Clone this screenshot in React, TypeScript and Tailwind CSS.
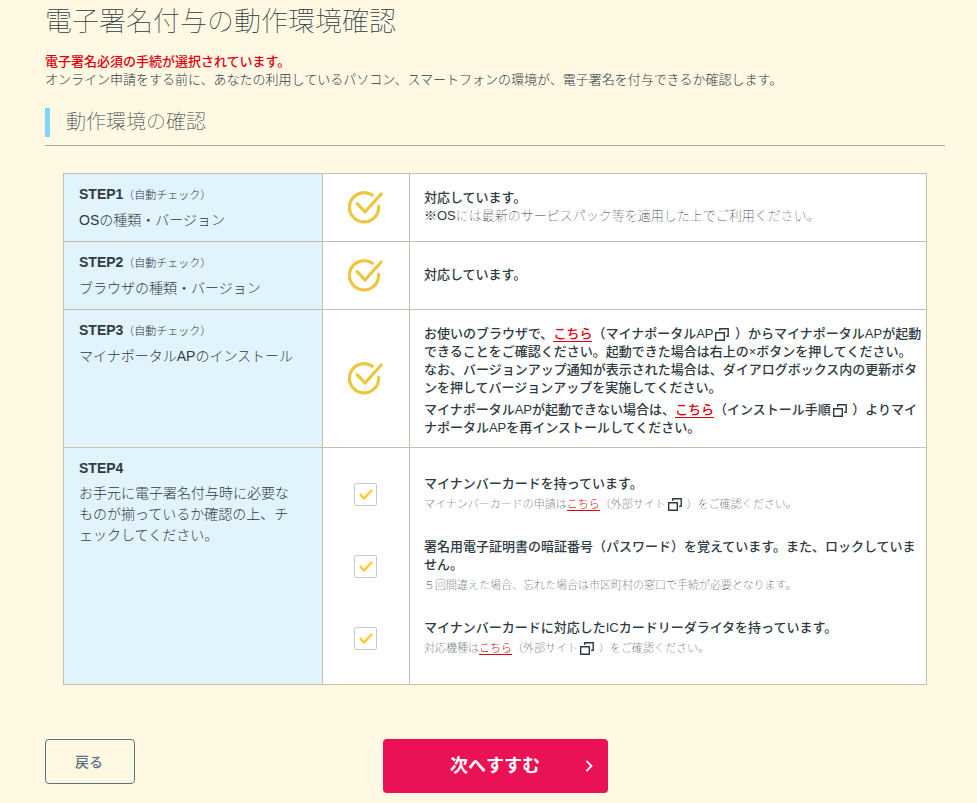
import type { ReactNode } from "react";

const CheckCircle = () => (
  <svg width="36" height="34" viewBox="0 0 36 34" fill="none" stroke="#edc63e" strokeWidth="3.2" strokeLinecap="round" strokeLinejoin="round" className="mx-auto block" role="img" aria-label="OK">
    <path d="M24.2 4.2A14.6 14.6 0 1 0 30.6 15.4" />
    <path d="M9.2 12.6L17 21L33.2 3" />
  </svg>
);

const WindowIcon = () => (
  <svg width="14" height="13" viewBox="0 0 14 13" fill="none" stroke="#2f3b42" strokeWidth="1.4" className="mx-0.5 inline-block align-[-3px]" aria-hidden="true">
    <path d="M4.7 2.8V.7H13.2V8.3H11.2" />
    <path d="M.7 4.7H9.3V12.2H.7Z" />
  </svg>
);

const TextLink = ({ children, light }: { children: ReactNode; light?: boolean }) => (
  <a href="#" className={`border-b border-[#e0000f] text-[#e0000f] ${light ? "font-light" : "font-medium"}`}>{children}</a>
);

const Auto = () => <span className="text-[11px] font-light">（自動チェック）</span>;

const thClass = "border border-[#c5bfae] bg-[#e1f3fd] pt-[10px] pr-6 pb-[10px] pl-[15px] text-left align-top font-light";
const iconClass = "border border-[#c5bfae] bg-white p-0 text-center align-middle";
const bodyClass = "border border-[#c5bfae] bg-white pr-0.5 pl-[14px] text-[13px] leading-[18px] font-medium";

const StepLabel = ({ step, auto, children }: { step: string; auto?: boolean; children: ReactNode }) => (
  <>
    <p className="whitespace-nowrap text-sm leading-[21px]">
      <span className="font-bold">{step}</span>
      {auto && <Auto />}
    </p>
    <p className="mt-1 text-sm leading-[21px] font-light">{children}</p>
  </>
);

const CheckBox = ({ id }: { id: string }) => (
  <span className="mx-auto grid w-[23px] place-items-center">
    <input id={id} type="checkbox" defaultChecked className="peer col-start-1 row-start-1 size-[23px] appearance-none rounded-xs border border-[#c4c8ce] bg-white" />
    <svg viewBox="0 0 14 12" className="pointer-events-none invisible col-start-1 row-start-1 h-3 w-3.5 peer-checked:visible" fill="none" stroke="#f9cf3c" strokeWidth="2.6" aria-hidden="true">
      <path d="M1 5.2L5 9.4L13 1" />
    </svg>
  </span>
);

const checks: { id: string; title: string; note: ReactNode; iconCell: string; textCell: string }[] = [
  {
    id: "card",
    title: "マイナンバーカードを持っています。",
    note: <>マイナンバーカードの申請は<TextLink light>こちら</TextLink>（外部サイト<WindowIcon /> ）をご確認ください。</>,
    iconCell: "h-[84px] border-t pt-[10px]",
    textCell: "border-t pt-2",
  },
  {
    id: "password",
    title: "署名用電子証明書の暗証番号（パスワード）を覚えています。また、ロックしていません。",
    note: "５回間違えた場合、忘れた場合は市区町村の窓口で手続が必要となります。",
    iconCell: "h-[72px] pb-0.5",
    textCell: "pb-1",
  },
  {
    id: "reader",
    title: "マイナンバーカードに対応したICカードリーダライタを持っています。",
    note: <>対応機種は<TextLink light>こちら</TextLink>（外部サイト<WindowIcon /> ）をご確認ください。</>,
    iconCell: "h-[81px] border-b pb-[10px]",
    textCell: "border-b pb-3",
  },
];

export default function App() {
  return (
    <main lang="ja" className="min-h-screen bg-[#fff8e3] pr-8 pb-[10px] pl-[45px] font-['Liberation_Sans','Noto_Sans_CJK_JP',sans-serif] text-[#2f3b42]">
      <h1 className="text-[27px] leading-[44px] font-thin">電子署名付与の動作環境確認</h1>
      <p className="mt-[9px] text-[13px] leading-[18px] font-medium text-[#e0000f]">電子署名必須の手続が選択されています。</p>
      <p className="text-[13px] leading-[18px] font-light">
        オンライン申請をする前に、あなたの利用しているパソコン、スマートフォンの環境が、電子署名を付与できるか確認します。
      </p>

      <section>
        <div className="mt-[19px] border-b border-[#a3a9a8] pb-2">
          <h2 className="border-l-5 border-[#7cd8fb] pl-4 text-xl leading-[29px] font-thin">動作環境の確認</h2>
        </div>

        <div className="mt-[27px] px-[18px]">
          <table className="w-full table-fixed border-collapse">
            <colgroup>
              <col className="w-[30%]" />
              <col className="w-[87px]" />
              <col />
            </colgroup>
            <tbody>
              <tr className="h-[68px]">
                <th scope="row" className={thClass}><StepLabel step="STEP1" auto>OSの種類・バージョン</StepLabel></th>
                <td className={iconClass}><CheckCircle /></td>
                <td className={`${bodyClass} pb-0.5`}>
                  <p>対応しています。</p>
                  <p className="font-thin">※OSには最新のサービスパック等を適用した上でご利用ください。</p>
                </td>
              </tr>
              <tr className="h-[68px]">
                <th scope="row" className={thClass}><StepLabel step="STEP2" auto>ブラウザの種類・バージョン</StepLabel></th>
                <td className={iconClass}><CheckCircle /></td>
                <td className={`${bodyClass} pb-0.5`}>対応しています。</td>
              </tr>
              <tr className="h-[138px]">
                <th scope="row" className={thClass}><StepLabel step="STEP3" auto>マイナポータルAPのインストール</StepLabel></th>
                <td className={iconClass}><CheckCircle /></td>
                <td className={`${bodyClass} pt-1`}>
                  <p>
                    お使いのブラウザで、<TextLink>こちら</TextLink>（マイナポータルAP<WindowIcon /> ）からマイナポータルAPが起動できることをご確認ください。起動できた場合は右上の×ボタンを押してください。
                    <br />
                    なお、バージョンアップ通知が表示された場合は、ダイアログボックス内の更新ボタンを押してバージョンアップを実施してください。
                  </p>
                  <p className="mt-1">
                    マイナポータルAPが起動できない場合は、<TextLink>こちら</TextLink>（インストール手順<WindowIcon /> ）よりマイナポータルAPを再インストールしてください。
                  </p>
                </td>
              </tr>
              {checks.map((item, index) => (
                <tr key={item.id}>
                  {index === 0 && (
                    <th scope="rowgroup" rowSpan={3} className={thClass}>
                      <StepLabel step="STEP4">お手元に電子署名付与時に必要なものが揃っているか確認の上、チェックしてください。</StepLabel>
                    </th>
                  )}
                  <td className={`border-x border-[#c5bfae] bg-white align-middle ${item.iconCell}`}><CheckBox id={item.id} /></td>
                  <td className={`border-x border-[#c5bfae] bg-white pr-0.5 pl-[14px] align-middle ${item.textCell}`}>
                    <label htmlFor={item.id} className="block text-[13px] leading-[18px] font-medium">{item.title}</label>
                    <p className="mt-0.5 text-[11px] leading-[18px] font-thin">{item.note}</p>
                  </td>
                </tr>
              ))}
            </tbody>
          </table>
        </div>
      </section>

      <div className="mt-[54px] grid grid-cols-[1fr_auto_1fr] items-start">
        <button type="button" className="h-[45px] w-[90px] rounded-sm border border-[#5f7280] pr-0.5 text-sm font-medium text-[#5f7280]">戻る</button>
        <button type="button" className="grid h-[54px] w-[225px] grid-cols-[1fr_auto_1fr] items-center rounded-sm bg-[#ea1154] px-[15px] text-lg font-bold text-white">
          <span className="col-start-2">次へすすむ</span>
          <svg width="8" height="12" viewBox="0 0 8 12" fill="none" stroke="currentColor" strokeWidth="1.8" className="justify-self-end" aria-hidden="true">
            <path d="M1.5 1L6.5 6L1.5 11" />
          </svg>
        </button>
      </div>
    </main>
  );
}
